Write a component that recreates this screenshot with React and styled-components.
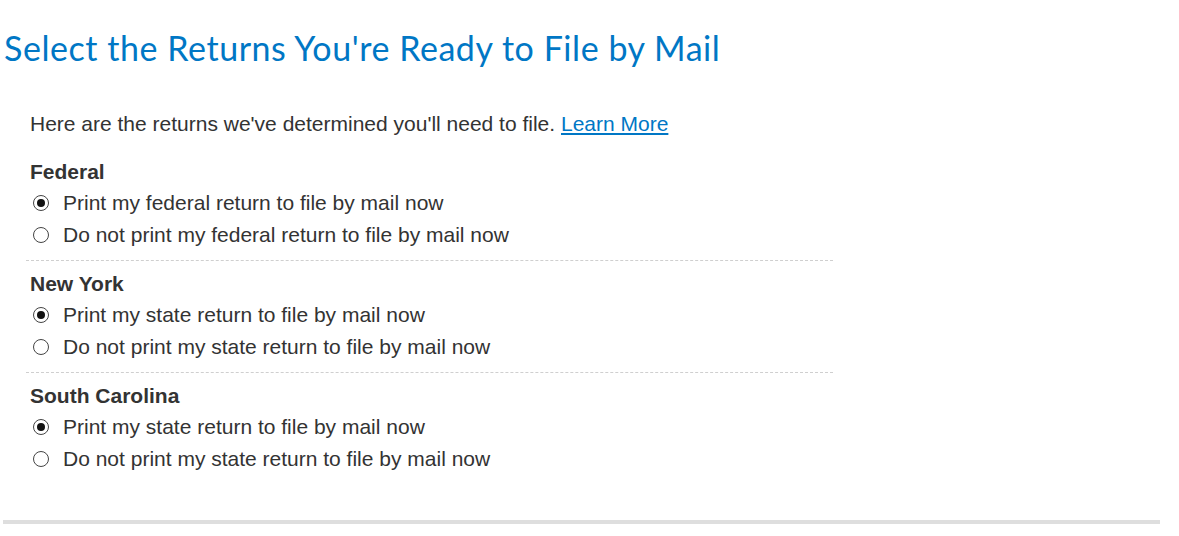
import React, { useState } from "react";
import styled, { createGlobalStyle } from "styled-components";

const GlobalStyle = createGlobalStyle`
  body {
    margin: 0;
    background: #fff;
    font-family: "Liberation Sans", Arial, sans-serif;
    color: #333;
  }
`;

const SECTIONS = [
  {
    name: "Federal",
    options: [
      "Print my federal return to file by mail now",
      "Do not print my federal return to file by mail now",
    ],
  },
  {
    name: "New York",
    options: [
      "Print my state return to file by mail now",
      "Do not print my state return to file by mail now",
    ],
  },
  {
    name: "South Carolina",
    options: [
      "Print my state return to file by mail now",
      "Do not print my state return to file by mail now",
    ],
  },
];

const App = () => {
  const [choices, setChoices] = useState(SECTIONS.map(() => 0));

  const pick = (section, option) =>
    setChoices((prev) => prev.map((c, i) => (i === section ? option : c)));

  return (
    <Page>
      <GlobalStyle />
      <Title>Select the Returns You're Ready to File by Mail</Title>
      <Content>
        <Intro>
          Here are the returns we've determined you'll need to file.{" "}
          <LearnMore href="#">Learn More</LearnMore>
        </Intro>
        <Sections>
          {SECTIONS.map((section, si) => (
            <Section key={section.name} last={si === SECTIONS.length - 1}>
              <SectionTitle>{section.name}</SectionTitle>
              {section.options.map((label, oi) => (
                <OptionRow key={label}>
                  <Radio
                    type="radio"
                    name={`section-${si}`}
                    checked={choices[si] === oi}
                    onChange={() => pick(si, oi)}
                  />
                  {label}
                </OptionRow>
              ))}
            </Section>
          ))}
        </Sections>
      </Content>
      <Rule />
    </Page>
  );
};

export default App;

const Page = styled.div`
  padding: 28px 0 0 0;
`;

const Title = styled.h1`
  margin: 0 0 0 4px;
  font-family: Lato, "Open Sans", sans-serif;
  font-weight: 400;
  font-size: 34px;
  letter-spacing: 0.55px;
  line-height: 40px;
  color: #0077c5;
`;

const Content = styled.div`
  padding: 44px 0 0 26px;
`;

const Intro = styled.p`
  margin: 0 0 24px 4px;
  font-size: 21px;
  line-height: 24px;
`;

const LearnMore = styled.a`
  color: #0077c5;
  text-decoration: underline;
`;

const Sections = styled.div`
  width: 807px;
`;

const Section = styled.div`
  padding: 0 4px ${(p) => (p.last ? "0" : "9px")};
  margin-bottom: 11px;
  border-bottom: ${(p) => (p.last ? "none" : "1px dashed #cfcfcf")};
`;

const SectionTitle = styled.div`
  font-size: 21px;
  font-weight: 700;
  line-height: 24px;
  margin-bottom: 3px;
`;

const OptionRow = styled.label`
  display: flex;
  align-items: center;
  gap: 14px;
  height: 32px;
  font-size: 21px;
  cursor: pointer;
`;

const Radio = styled.input`
  appearance: none;
  margin: 0 0 0 3px;
  width: 16px;
  height: 16px;
  border: 1px solid #444;
  border-radius: 50%;
  box-sizing: border-box;
  display: grid;
  place-items: center;
  cursor: pointer;

  &::after {
    content: "";
    width: 8px;
    height: 8px;
    border-radius: 50%;
    background: #111;
    transform: scale(0);
  }

  &:checked::after {
    transform: scale(1);
  }
`;

const Rule = styled.div`
  margin: 45px 19px 0 3px;
  height: 4px;
  background: #dedede;
`;
